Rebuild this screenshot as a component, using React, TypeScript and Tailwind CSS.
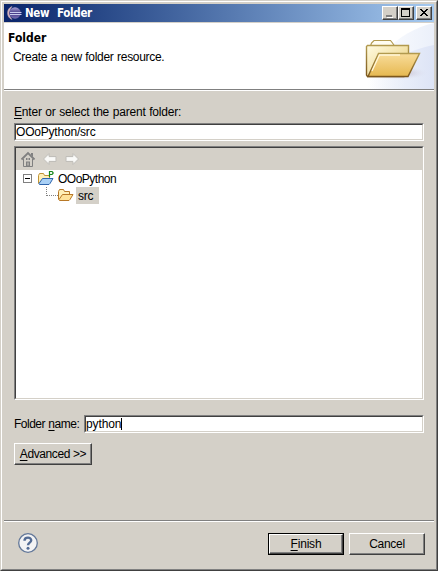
import React from "react";

const raised =
  "border border-t-white border-l-white border-r-[#404040] border-b-[#404040] shadow-[inset_-1px_-1px_0_#808080]";
const sunken =
  "border border-t-[#808080] border-l-[#808080] border-r-white border-b-white";
const sunkenInner =
  "border border-t-[#404040] border-l-[#404040] border-r-[#d4d0c8] border-b-[#d4d0c8]";

function EclipseLogo() {
  return (
    <svg width="16" height="16" viewBox="0 0 16 16" className="block">
      <defs>
        <linearGradient id="orb" x1="0" y1="0" x2="0" y2="1">
          <stop offset="0" stopColor="#a9a3d6" />
          <stop offset="0.5" stopColor="#463c88" />
          <stop offset="1" stopColor="#7a70b4" />
        </linearGradient>
      </defs>
      <path d="M6 1.500A7 7 0 0 0 6 14.500C2.800 11 2.800 5 6 1.500Z" fill="#d3b2bc" stroke="#d3b2bc" strokeWidth="0.500" />
      <circle cx="9" cy="8" r="5.800" fill="url(#orb)" />
      <path d="M4 7.500h11.500M4 9.500h11.500" stroke="#c9cdee" strokeWidth="1" />
    </svg>
  );
}

function BannerArt() {
  return (
    <svg width="80" height="66" viewBox="0 0 80 66" className="block">
      <defs>
        <linearGradient id="wash" x1="0.1" y1="0" x2="1" y2="0">
          <stop offset="0" stopColor="#e4eaf8" stopOpacity="0" />
          <stop offset="1" stopColor="#dde4f6" />
        </linearGradient>
        <linearGradient id="wash2" x1="0.1" y1="0" x2="1" y2="0">
          <stop offset="0" stopColor="#fff" />
          <stop offset="1" stopColor="#ebf0fa" />
        </linearGradient>
        <linearGradient id="back" x1="0" y1="0" x2="1" y2="1">
          <stop offset="0" stopColor="#fffbe2" />
          <stop offset="1" stopColor="#e9cd76" />
        </linearGradient>
        <linearGradient id="front" x1="0" y1="0" x2="0" y2="1">
          <stop offset="0" stopColor="#f8dc9a" />
          <stop offset="1" stopColor="#e6b850" />
        </linearGradient>
        <linearGradient id="edge" x1="0" y1="0" x2="0" y2="1">
          <stop offset="0" stopColor="#b29a4e" />
          <stop offset="1" stopColor="#7b561c" />
        </linearGradient>
        <radialGradient id="shade">
          <stop offset="0" stopColor="#b7a9b8" />
          <stop offset="1" stopColor="#dfe3f3" stopOpacity="0" />
        </radialGradient>
      </defs>
      <path d="M80 0C62 4 44 14 32 28L5 66H80Z" fill="url(#wash2)" />
      <path d="M80 22C54 27 28 40 8 66H80Z" fill="url(#wash)" />
      <ellipse cx="44" cy="50" rx="30" ry="7" fill="url(#shade)" />
      <path d="M16.500 23L17.500 20L20 17.500H36.500L38.500 20L40.500 23" fill="#fffdf2" stroke="#b29a50" strokeWidth="1.200" />
      <path d="M12.500 52V23.500L13.500 22.500H54.500V47L50 53.500H13.500Z" fill="url(#back)" stroke="url(#edge)" strokeWidth="1.400" />
      <path d="M14 53.500L24.500 30.500H65.500L54 53.500Z" fill="url(#front)" stroke="url(#edge)" strokeWidth="1.400" />
      <path d="M18 48L25.500 32H46" fill="none" stroke="#fff6d8" strokeWidth="1.300" />
    </svg>
  );
}

function HomeIcon() {
  return (
    <svg width="16" height="16" viewBox="0 0 16 16" className="block">
      <path d="M3.500 8V15.500H12.500V8" fill="#d4d0c8" stroke="#808080" />
      <path d="M1.500 8.500L8 2L14.500 8.500" fill="none" stroke="#808080" strokeWidth="1.800" />
      <path d="M11 2h2v4l-2-2ZM6 7h4v2H6ZM6 10.500h4v5H6Z" fill="#808080" />
      <path d="M8 7v2M8 11.500v3" stroke="#d4d0c8" />
    </svg>
  );
}

function ArrowIcon({ flip = false }: { flip?: boolean }) {
  return (
    <svg width="16" height="16" viewBox="0 0 16 16" className={flip ? "block -scale-x-100" : "block"}>
      <path d="M1.500 8L7 2.500V5.500H14V10.500H7V13.500Z" fill="#f4f4f2" stroke="#c0beb9" strokeLinejoin="round" />
      <path d="M3 8L6.500 5V7H13V9H6.500V11Z" fill="#fafaf8" />
    </svg>
  );
}

function FolderGlyph({ project = false }: { project?: boolean }) {
  return (
    <svg width="16" height="16" viewBox="0 0 16 16" className="block overflow-visible">
      <path
        d="M.5 12.500V4.500L1.500 2.500H5.500L6.500 4.500H11.500V7"
        fill="#fff0b8"
        stroke={project ? "#c09336" : "#b87827"}
      />
      <path
        d="M1 12.500L4.500 7.500H15L12 12.500L11 13.500H1.500Z"
        fill={project ? "#a9d0f5" : "#ffe39b"}
        stroke={project ? "#2f65ac" : "#b87827"}
        strokeLinejoin="round"
      />
      {project && <path d="M11.500 6V.5H14L15 1.500V2.500L14 3.500H11.500" fill="#fff" stroke="#16871b" strokeWidth="1.200" />}
    </svg>
  );
}

function TitleButton({ children }: { children: React.ReactNode }) {
  return (
    <div className={`h-[14px] w-4 bg-[#d4d0c8] ${raised}`}>
      <svg width="14" height="12" viewBox="0 0 14 12" className="block" shapeRendering="crispEdges">
        {children}
      </svg>
    </div>
  );
}

export default function App() {
  return (
    <div className="flex h-[571px] w-[438px] flex-col border border-t-[#d4d0c8] border-l-[#d4d0c8] border-r-[#404040] border-b-[#404040] bg-[#d4d0c8] font-['Liberation_Sans',Arial,sans-serif] text-[12px] leading-[16px] tracking-[-0.2px] text-black [word-spacing:0.5px]">
      <div className="flex min-h-0 flex-1 flex-col border border-t-white border-l-white border-r-[#808080] border-b-[#808080] p-[2px]">
        <header className="flex h-[18px] shrink-0 items-center bg-linear-to-r from-[#0a246a] to-[#a6caf0] px-[2px]">
          <EclipseLogo />
          <span className="flex-1 whitespace-nowrap pl-[3px] font-['DejaVu_Sans_Condensed','DejaVu_Sans',sans-serif] text-[11.500px] font-bold tracking-[-0.3px] text-white">
            New&nbsp; Folder
          </span>
          <div className="flex">
            <TitleButton>
              <path d="M4 10h6v1H4z" fill="#fff" />
              <path d="M3 8h6v2H3z" fill="#808080" />
            </TitleButton>
            <TitleButton>
              <path d="M2 1h9v9H2zM3 3v6h7V3z" fill="#000" fillRule="evenodd" />
            </TitleButton>
            <div className="w-[2px]" />
            <TitleButton>
              <path
                d="M3 2h2v1h1v1h2V3h1V2h2v1h-1v1H9v1H8v1h1v1h1v1h1v1H9V8H8V7H6v1H5v1H3V8h1V7h1V6h1V5H5V4H4V3H3z"
                fill="#000"
              />
            </TitleButton>
          </div>
        </header>

        <section className="mt-px flex h-[66px] shrink-0 justify-between bg-white">
          <div className="pl-[4px] pt-[7px]">
            <h1 className="whitespace-nowrap font-['DejaVu_Sans_Condensed','DejaVu_Sans',sans-serif] text-[12px] font-bold leading-[16px] tracking-[0px]">
              Folder
            </h1>
            <p className="whitespace-nowrap pl-[5px] pt-[3px] tracking-[-0.3px]">Create a new folder resource.</p>
          </div>
          <BannerArt />
        </section>
        <div className="h-[2px] shrink-0 border-t border-[#808080] bg-white" />

        <main className="flex min-h-0 flex-1 flex-col px-[10px] pt-[13px]">
          <label className="block h-[16px] whitespace-nowrap">
            <span className="underline underline-offset-2">E</span>nter or select the parent folder:
          </label>
          <div className={`mt-[3px] h-[18px] shrink-0 ${sunken}`}>
            <div className={`flex h-full items-center bg-white ${sunkenInner}`}>
              <span className="whitespace-nowrap">OOoPython/src</span>
            </div>
          </div>

          <div className={`mt-[5px] h-[254px] shrink-0 ${sunken}`}>
            <div className={`h-full bg-white ${sunkenInner}`}>
              <div className="flex h-[22px] items-center gap-[6px] bg-[#d4d0c8] pl-[4px]">
                <HomeIcon />
                <ArrowIcon />
                <ArrowIcon flip />
              </div>
              <div className="flex h-[17px] items-center pl-[7px]">
                <div className="flex size-[9px] items-center justify-center border border-[#808080]">
                  <div className="h-px w-[5px] bg-black" />
                </div>
                <div className="ml-[6px]">
                  <FolderGlyph project />
                </div>
                <span className="ml-[4px] whitespace-nowrap tracking-[-0.5px]">OOoPython</span>
              </div>
              <div className="flex h-[17px] pl-[30px]">
                <div className="h-[9px] w-[12px] border-b border-l border-dotted border-[#808080]" />
                <FolderGlyph />
                <div className="ml-[2px] flex h-[17px] w-[23px] items-center bg-[#d4d0c8] pl-[2px]">src</div>
              </div>
            </div>
          </div>

          <div className="mt-[15px] flex h-[18px] shrink-0 items-center">
            <label className="w-[70px] whitespace-nowrap tracking-[-0.5px]">
              Folder <span className="underline underline-offset-2">n</span>ame:
            </label>
            <div className={`h-[18px] flex-1 ${sunken}`}>
              <div className={`flex h-full items-center bg-white ${sunkenInner}`}>
                <span className="whitespace-nowrap tracking-[-0.1px]">python</span>
                <span className="h-[12px] w-px bg-black" />
              </div>
            </div>
          </div>

          <button
            className={`mt-[10px] flex h-[22px] w-[78px] shrink-0 items-center justify-center whitespace-nowrap tracking-[-0.4px] ${raised}`}
          >
            <span className="underline underline-offset-2">A</span>dvanced &gt;&gt;
          </button>
        </main>

        <footer className="h-[47px] shrink-0 border-t border-[#808080]">
          <div className="flex h-full items-start justify-between border-t border-white pl-[14px] pr-[9px] pt-[11px]">
            <svg width="20" height="20" viewBox="0 0 20 20" className="block">
              <circle cx="10" cy="10" r="9.300" fill="#f3f3f4" stroke="#627799" strokeWidth="1.300" />
              <path
                d="M6.500 7.700C6.500 3.700 13.500 3.700 13.200 7.500C13 9.700 10 9.700 10 12.300"
                fill="none"
                stroke="#536b94"
                strokeWidth="2.400"
              />
              <circle cx="10" cy="15.200" r="1.500" fill="#536b94" />
            </svg>
            <div className="flex gap-[5px]">
              <button className="h-[22px] w-[76px] border border-black">
                <span className={`flex h-full items-center justify-center tracking-[-0.2px] ${raised}`}>
                  <span className="underline underline-offset-2">F</span>inish
                </span>
              </button>
              <button className={`flex h-[22px] w-[76px] items-center justify-center tracking-[-0.3px] ${raised}`}>
                Cancel
              </button>
            </div>
          </div>
        </footer>
      </div>
    </div>
  );
}
